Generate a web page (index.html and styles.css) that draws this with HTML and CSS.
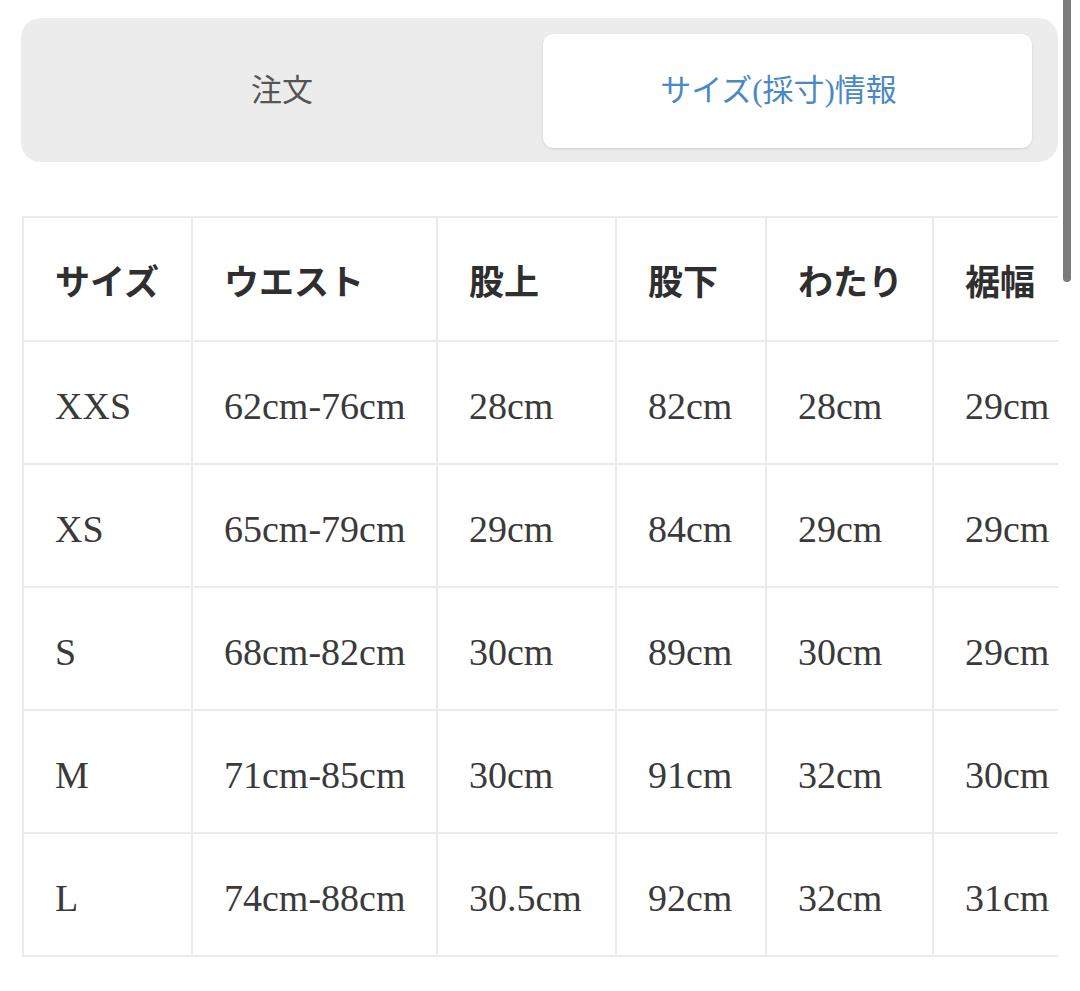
FILE: index.html
```html
<!DOCTYPE html>
<html lang="ja">
<head>
<meta charset="utf-8">
<title>サイズ(採寸)情報</title>
<link rel="stylesheet" href="styles.css">
</head>
<body>
<div class="page">
  <div class="tabs">
    <div class="tab">注文</div>
    <div class="tab tab-active">サイズ(採寸)情報</div>
  </div>
  <div class="table-wrap">
    <table class="size-table">
      <colgroup>
        <col class="c1"><col class="c2"><col class="c3"><col class="c4"><col class="c5"><col class="c6">
      </colgroup>
      <thead>
        <tr><th>サイズ</th><th>ウエスト</th><th>股上</th><th>股下</th><th>わたり</th><th>裾幅</th></tr>
      </thead>
      <tbody>
        <tr><td>XXS</td><td>62cm-76cm</td><td>28cm</td><td>82cm</td><td>28cm</td><td>29cm</td></tr>
        <tr><td>XS</td><td>65cm-79cm</td><td>29cm</td><td>84cm</td><td>29cm</td><td>29cm</td></tr>
        <tr><td>S</td><td>68cm-82cm</td><td>30cm</td><td>89cm</td><td>30cm</td><td>29cm</td></tr>
        <tr><td>M</td><td>71cm-85cm</td><td>30cm</td><td>91cm</td><td>32cm</td><td>30cm</td></tr>
        <tr><td>L</td><td>74cm-88cm</td><td>30.5cm</td><td>92cm</td><td>32cm</td><td>31cm</td></tr>
      </tbody>
    </table>
  </div>
</div>
<div class="scrollbar"></div>
</body>
</html>
```
FILE: styles.css
```css
html, body {
  margin: 0;
  padding: 0;
  background: #ffffff;
}
body {
  font-family: "Liberation Serif", "Noto Sans CJK JP", serif;
  color: #333333;
  width: 1080px;
  height: 991px;
  overflow: hidden;
}
.page {
  padding: 18px 22px 0 21px;
}
.tabs {
  display: flex;
  align-items: stretch;
  width: 1037px;
  height: 144px;
  box-sizing: border-box;
  padding: 16px 26px 14px 0;
  background: #ececec;
  border-radius: 20px;
}
.tab {
  flex: 1;
  display: flex;
  align-items: center;
  justify-content: center;
  font-size: 31px;
  color: #555555;
  padding-bottom: 7px;
}
.tab-active {
  flex: 0 0 489px;
  background: #ffffff;
  border-radius: 10px;
  color: #4a88c6;
  box-shadow: 0 1px 3px rgba(0, 0, 0, 0.12);
  padding-right: 18px;
  box-sizing: border-box;
}
.table-wrap {
  margin-top: 54px;
  margin-left: 1px;
  width: 1036px;
  overflow: hidden;
}
.size-table {
  border-collapse: collapse;
  table-layout: fixed;
  width: 1060px;
}
.c1 { width: 169px; }
.c2 { width: 245px; }
.c3 { width: 179px; }
.c4 { width: 150px; }
.c5 { width: 167px; }
.c6 { width: 150px; }
.size-table th,
.size-table td {
  border: 2px solid #ebebeb;
  padding: 0 0 0 31px;
  text-align: left;
  vertical-align: middle;
  white-space: nowrap;
}
.size-table th {
  height: 122px;
  font-size: 35px;
  font-weight: 700;
  color: #2f2f2f;
}
.size-table td {
  height: 115px;
  font-size: 38px;
  color: #3a3a3a;
  padding-top: 6px;
}
.scrollbar {
  position: fixed;
  top: 0;
  left: 1063px;
  width: 8px;
  height: 282px;
  background: #7c7c7c;
  border-radius: 0 0 4px 4px;
}
```
